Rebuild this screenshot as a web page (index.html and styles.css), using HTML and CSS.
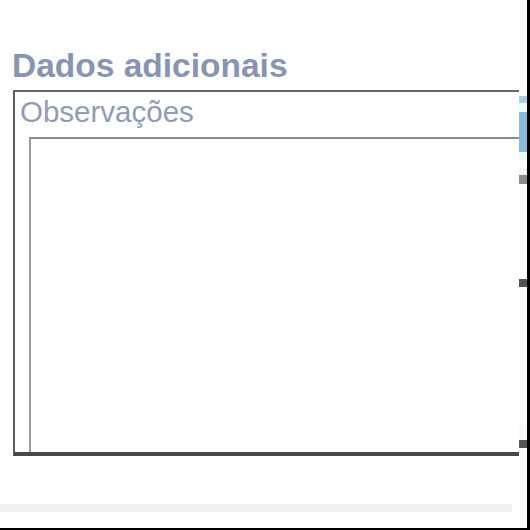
FILE: index.html
```html
<!DOCTYPE html>
<html lang="pt">
<head>
<meta charset="utf-8">
<title>Dados adicionais</title>
<link rel="stylesheet" href="styles.css">
</head>
<body>
<div class="frame">
  <div class="main">
    <h2 class="title">Dados adicionais</h2>
    <div class="box">
      <div class="label">Observações</div>
      <textarea class="notes"></textarea>
    </div>
    <div class="footer-strip"></div>
  </div>
  <div class="side">
    <div class="seg s-gap96"></div>
    <div class="seg s-lightblue"></div>
    <div class="seg s-pale9"></div>
    <div class="seg s-blue"></div>
    <div class="seg s-pale8"></div>
    <div class="seg s-white8"></div>
    <div class="seg s-faint"></div>
    <div class="seg s-gray"></div>
    <div class="seg s-gap95"></div>
    <div class="seg s-dark"></div>
    <div class="seg s-gap137"></div>
    <div class="seg s-faint16"></div>
    <div class="seg s-dark"></div>
  </div>
</div>
</body>
</html>
```
FILE: styles.css
```css
html, body {
  margin: 0;
  padding: 0;
  background: #fff;
}
.frame {
  width: 530px;
  height: 530px;
  box-sizing: border-box;
  border-right: 3px solid #000;
  border-bottom: 2px solid #000;
  display: flex;
  overflow: hidden;
}
.main {
  width: 519px;
  flex: none;
  overflow: hidden;
  padding-top: 47px;
  box-sizing: border-box;
}
.title {
  margin: 0 0 5px 12px;
  font-family: "Liberation Sans", Arial, sans-serif;
  font-weight: bold;
  font-size: 33.5px;
  line-height: 38px;
  color: #8795b2;
  white-space: nowrap;
}
.box {
  margin-left: 13px;
  width: 560px;
  border-top: 2px solid #666;
  border-left: 2px solid #5e5e5e;
  border-bottom: 4px solid #484848;
  box-sizing: border-box;
}
.label {
  padding: 4px 0 0 5px;
  font-family: "Liberation Sans", Arial, sans-serif;
  font-size: 29.5px;
  line-height: 32px;
  color: #8f9cb8;
  white-space: nowrap;
}
.notes {
  display: block;
  margin: 9px 0 0 14px;
  width: 540px;
  height: 315px;
  box-sizing: border-box;
  border: none;
  border-top: 2px solid #8c8c8c;
  border-left: 2px solid #9c9c9c;
  padding: 0;
  resize: none;
  outline: none;
  background: #fff;
}
.footer-strip {
  margin-top: 48px;
  width: 512px;
  height: 8px;
  background: #efefef;
}
.side {
  width: 8px;
  flex: none;
  display: flex;
  flex-direction: column;
}
.seg { width: 100%; flex: none; }
.s-gap96 { height: 96px; }
.s-lightblue { height: 7px; background: #a9cee6; }
.s-pale9 { height: 9px; background: #f1f8f8; }
.s-blue { height: 40px; background: #88bbdd; }
.s-pale8 { height: 8px; background: #eef6f6; }
.s-white8 { height: 8px; }
.s-faint { height: 7px; background: #f4f4f4; }
.s-gray { height: 9px; background: #8c8c8c; }
.s-gap95 { height: 95px; }
.s-dark { height: 8px; background: #555; }
.s-gap137 { height: 137px; }
.s-faint16 { height: 16px; background: #f8f8f8; }
```
